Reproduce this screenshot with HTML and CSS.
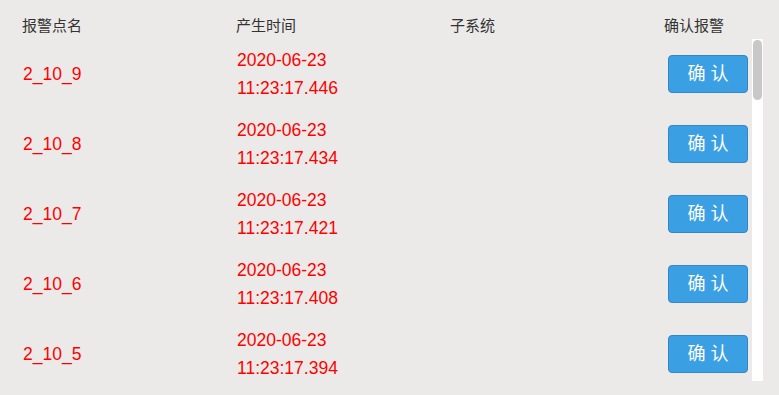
FILE: index.html
```html
<!DOCTYPE html>
<html lang="zh-CN">
<head>
<meta charset="utf-8">
<title>报警列表</title>
<link rel="stylesheet" href="styles.css">
</head>
<body>
<div class="alarm-panel">
  <div class="alarm-head">
    <div class="col">报警点名</div>
    <div class="col">产生时间</div>
    <div class="col">子系统</div>
    <div class="col">确认报警</div>
  </div>
  <div class="alarm-body">
    <div class="alarm-list">
      <div class="row"><div class="name">2_10_9</div><div class="time">2020-06-23<br>11:23:17.446</div><div class="sys"></div><div class="act"><button class="btn">确 认</button></div></div>
      <div class="row"><div class="name">2_10_8</div><div class="time">2020-06-23<br>11:23:17.434</div><div class="sys"></div><div class="act"><button class="btn">确 认</button></div></div>
      <div class="row"><div class="name">2_10_7</div><div class="time">2020-06-23<br>11:23:17.421</div><div class="sys"></div><div class="act"><button class="btn">确 认</button></div></div>
      <div class="row"><div class="name">2_10_6</div><div class="time">2020-06-23<br>11:23:17.408</div><div class="sys"></div><div class="act"><button class="btn">确 认</button></div></div>
      <div class="row"><div class="name">2_10_5</div><div class="time">2020-06-23<br>11:23:17.394</div><div class="sys"></div><div class="act"><button class="btn">确 认</button></div></div>
    </div>
    <div class="scrollbar"><div class="thumb"></div></div>
  </div>
</div>
</body>
</html>
```

FILE: styles.css
```css
html, body {
  margin: 0;
  padding: 0;
  background: #ebeae8;
  overflow: hidden;
}

body {
  font-family: "Liberation Sans", "Noto Sans CJK SC", Arial, sans-serif;
}

.alarm-panel {
  width: 763px;
  height: 395px;
  display: flex;
  flex-direction: column;
}

.alarm-head {
  height: 39px;
  box-sizing: border-box;
  padding: 15px 0 0 22px;
  display: grid;
  grid-template-columns: 214px 214px 214px auto;
  font-family: "Noto Sans CJK SC", sans-serif;
  font-size: 15px;
  line-height: 20px;
  color: #333333;
}

.alarm-body {
  height: 342px;
  display: flex;
}

.alarm-list {
  flex: 1;
  overflow: hidden;
}

.scrollbar {
  width: 11px;
  background: #ffffff;
  padding: 1px;
  box-sizing: border-box;
}

.thumb {
  height: 60px;
  background: #c8c8c8;
  border-radius: 5px;
}

.row {
  height: 70px;
  padding-left: 23px;
  display: grid;
  grid-template-columns: 214px 214px 194px auto;
  align-items: center;
  color: #ff0000;
  font-size: 17.5px;
}

.time {
  line-height: 28px;
}

.act {
  padding-left: 23px;
}

.btn {
  width: 80px;
  height: 38px;
  box-sizing: border-box;
  display: block;
  background: #3a9fe3;
  border: 1px solid #3486c8;
  border-radius: 4px;
  color: #ffffff;
  font-family: "Liberation Sans", "Noto Sans CJK SC", sans-serif;
  font-size: 18px;
  padding: 0;
  line-height: 36px;
  text-align: center;
}
```
